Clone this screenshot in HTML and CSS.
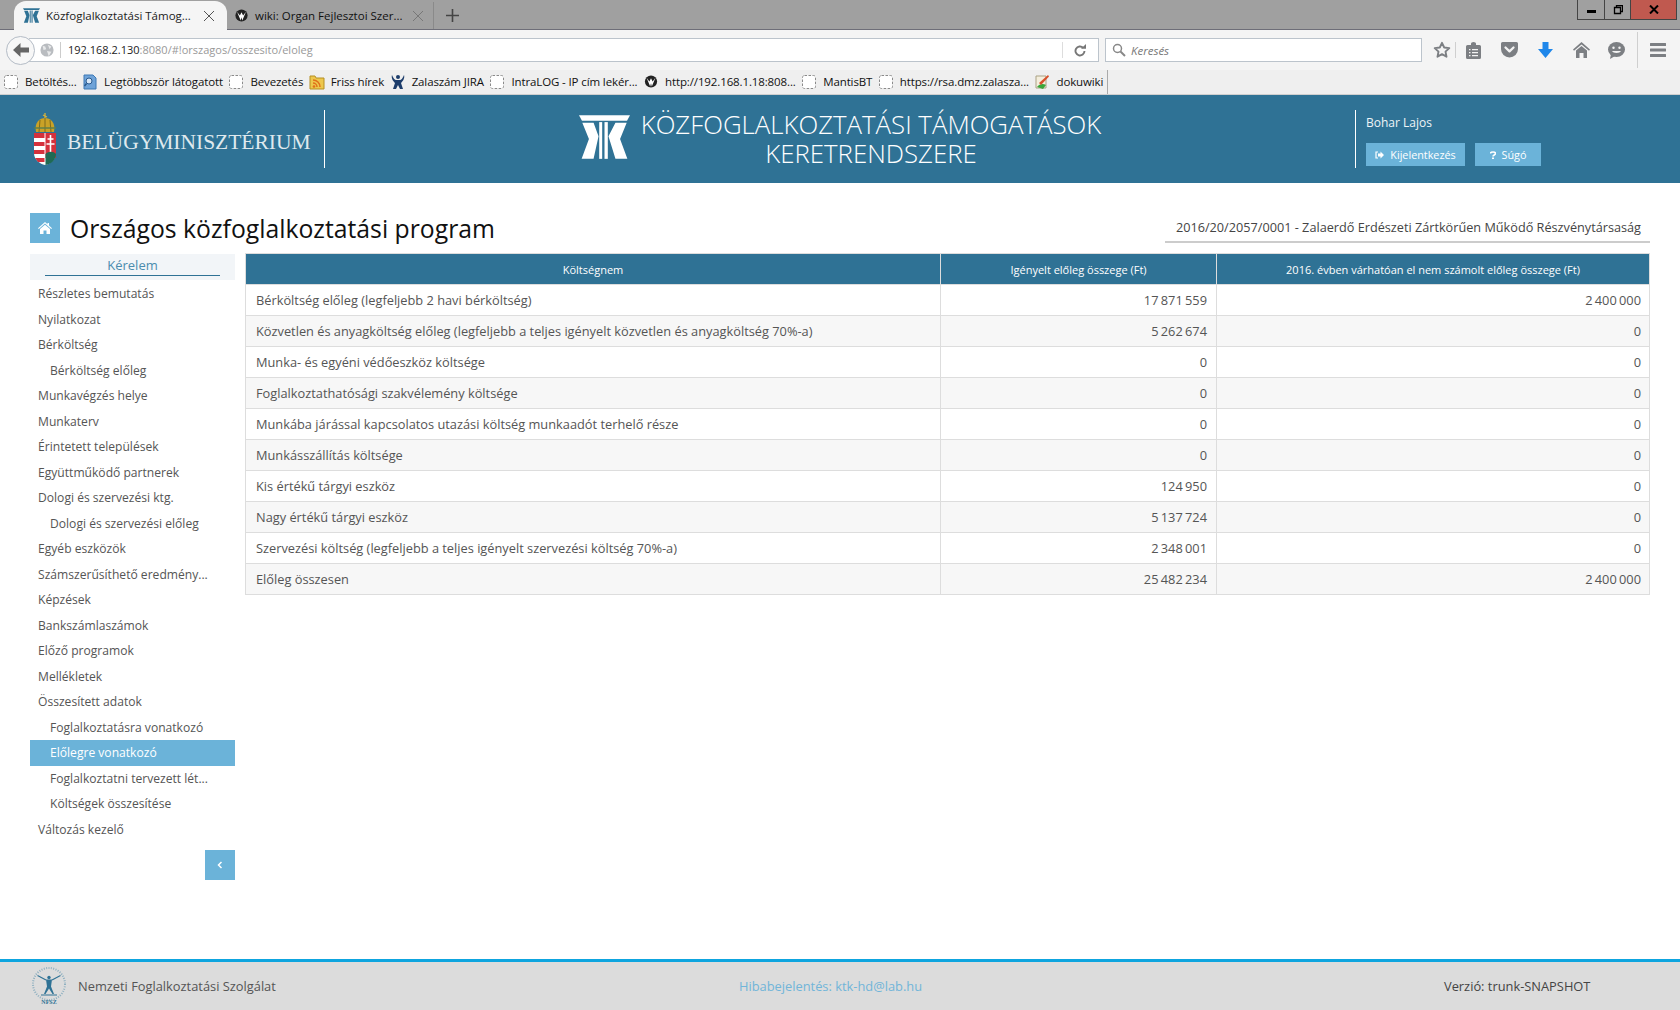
FILE: index.html
```html
<!DOCTYPE html>
<html lang="hu">
<head>
<meta charset="utf-8">
<title>Közfoglalkoztatási Támogatások Keretrendszere</title>
<link rel="stylesheet" href="styles.css">
</head>
<body>
<svg class="defs" width="0" height="0">
  <symbol id="ktk" viewBox="28 20 154 132">
    <path d="M28 20H182L173 37H37Z"/>
    <path d="M38 43H72L87 84 72 152H36L58 92Z"/>
    <path d="M89 41H98V152H89Z"/>
    <path d="M105 41H115V152H105Z"/>
    <path d="M172 43H138L117 84 138 152H174L152 92Z"/>
  </symbol>
  <symbol id="dash" viewBox="0 0 16 16">
    <rect x="1.5" y="1.5" width="13" height="13" rx="2" fill="#fff" stroke="#8a8a8a" stroke-dasharray="2.5 1.5"/>
  </symbol>
  <symbol id="globe" viewBox="0 0 16 16">
    <circle cx="8" cy="8" r="7.5" fill="#222"/>
    <path d="M2.500 3.500 7 14l1-4 1 4 4.500-10.500L10 8 8 4 6 8z" fill="#fff"/>
  </symbol>
</svg>

<div class="tabbar">
  <div class="tab tab-active">
    <svg class="tab-logo" width="17" height="15"><use href="#ktk"/></svg>
    <span class="tab-title">Közfoglalkoztatási Támog...</span>
    <svg class="tab-close" width="12" height="12" viewBox="0 0 12 12"><path d="M1 1l10 10M11 1L1 11" stroke="#555" fill="none"/></svg>
  </div>
  <div class="tab tab-idle">
    <svg class="tab-fav" width="13" height="13"><use href="#globe"/></svg>
    <span class="tab-title">wiki: Organ Fejlesztoi Szer...</span>
    <svg class="tab-close" width="12" height="12" viewBox="0 0 12 12"><path d="M1 1l10 10M11 1L1 11" stroke="#777" fill="none"/></svg>
  </div>
  <div class="tab-new"><svg width="13" height="13" viewBox="0 0 13 13"><path d="M6.500 0v13M0 6.500h13" stroke="#444" stroke-width="1.600"/></svg></div>
  <div class="winctl">
    <div class="win win-min"><span class="min-glyph"></span></div>
    <div class="win win-max"><svg width="10" height="10" viewBox="0 0 10 10"><path d="M2.500 2.500h5v6h-6v-6zM3.500 2V.5h6v6H8" fill="none" stroke="#000" stroke-width="1.300"/></svg></div>
    <div class="win win-close"><svg width="10" height="9" viewBox="0 0 10 9"><path d="M1 .5l8 8M9 .5l-8 8" stroke="#000" stroke-width="2"/></svg></div>
  </div>
</div>

<div class="navbar">
  <div class="back"><svg width="16" height="14" viewBox="0 0 16 14"><path d="M7.500 0L0 7l7.500 7V9.500H16v-5H7.500z" fill="#666"/></svg></div>
  <div class="urlbar">
    <svg class="url-globe" width="14" height="14" viewBox="0 0 16 16"><circle cx="8" cy="8" r="7.500" fill="#b9bcc0"/><path d="M3 3l3 1 1 3-3 1zM9 2l4 2-2 3zM8 9l5 1-3 5z" fill="#e8e9ea"/></svg>
    <span class="url-text"><span class="url-host">192.168.2.130</span>:8080/#!orszagos/osszesito/eloleg</span>
    <span class="url-reload"><svg width="13" height="13" viewBox="0 0 13 13"><path d="M10.500 7a4.500 4.500 0 1 1-1.400-3.300" fill="none" stroke="#777" stroke-width="1.900"/><path d="M7 4.800h5V0z" fill="#777"/></svg></span>
  </div>
  <div class="searchbar">
    <svg width="14" height="14" viewBox="0 0 14 14"><circle cx="5.500" cy="5.500" r="4" fill="none" stroke="#888" stroke-width="1.500"/><path d="M8.500 8.500L13 13" stroke="#888" stroke-width="2"/></svg>
    <span class="search-text">Keresés</span>
  </div>
  <div class="nav-icons">
    <svg class="ni ni-star" width="18" height="18" viewBox="0 0 18 18"><path d="M9 1.800l2.200 4.700 5.100.6-3.800 3.500 1 5.100L9 13.200l-4.500 2.500 1-5.100L1.700 7.100l5.100-.6z" fill="none" stroke="#7c7f83" stroke-width="1.900" stroke-linejoin="round"/></svg>
    <span class="ni-sep"></span>
    <svg class="ni ni-clip" width="15" height="17" viewBox="0 0 15 17"><path d="M1.500 3H5V1.500a2.500 1.500 0 0 1 5 0V3h3.500A1.500 1.500 0 0 1 15 4.500v11a1.500 1.500 0 0 1-1.500 1.500h-12A1.500 1.500 0 0 1 0 15.500v-11A1.500 1.500 0 0 1 1.500 3z" fill="#7c7f83"/><path d="M3 7h1.500v1.200H3zM6 7h6v1.200H6zM3 10h1.500v1.200H3zM6 10h6v1.200H6zM3 13h1.500v1.200H3zM6 13h6v1.200H6z" fill="#f3f3f3"/></svg>
    <svg class="ni ni-pocket" width="17" height="16" viewBox="0 0 17 16"><path d="M1.500 0h14A1.500 1.500 0 0 1 17 1.500V7A8.500 8.500 0 0 1 0 7V1.500A1.500 1.500 0 0 1 1.500 0z" fill="#7c7f83"/><path d="M4.500 5.500l4 3.800 4-3.800" fill="none" stroke="#f3f3f3" stroke-width="2.300" stroke-linecap="round" stroke-linejoin="round"/></svg>
    <svg class="ni ni-down" width="15" height="16" viewBox="0 0 15 16"><path d="M4.500 0h6v7H15l-7.500 9L0 7h4.500z" fill="#1f87ea"/></svg>
    <svg class="ni ni-home" width="17" height="16" viewBox="0 0 17 16"><path d="M8.500 0L17 7.500l-1 1.200-7.500-6.300L1 8.700 0 7.500z" fill="#7c7f83"/><path d="M8.500 4L14 8.600V16h-3.500v-5h-4v5H3V8.600z" fill="#7c7f83"/></svg>
    <svg class="ni ni-chat" width="17" height="17" viewBox="0 0 17 17"><ellipse cx="8.500" cy="7.500" rx="8.500" ry="7.500" fill="#7c7f83"/><path d="M3 12l-1 5 5-3z" fill="#7c7f83"/><circle cx="5.500" cy="5.800" r="1.200" fill="#f3f3f3"/><circle cx="11.500" cy="5.800" r="1.200" fill="#f3f3f3"/><path d="M4 9h9c-1 2.500-8 2.500-9 0z" fill="#f3f3f3"/></svg>
    <span class="ni-sep ni-sep-tall"></span>
    <svg class="ni ni-menu" width="16" height="14" viewBox="0 0 16 14"><path d="M.5 0h15a.5.5 0 0 1 .5.500v2a.5.5 0 0 1-.5.500H.500A.5.5 0 0 1 0 2.500v-2A.5.5 0 0 1 .5 0zM.5 5.500h15a.5.500 0 0 1 .5.500v2a.5.500 0 0 1-.5.500H.500A.5.500 0 0 1 0 8V6a.5.500 0 0 1 .5-.5zM.5 11h15a.5.500 0 0 1 .5.500v2a.5.500 0 0 1-.5.500H.500a.5.500 0 0 1-.5-.5v-2a.5.500 0 0 1 .5-.5z" fill="#7c7f83"/></svg>
  </div>
</div>

<div class="bookmarks">
  <div class="bm"><svg width="16" height="16"><use href="#dash"/></svg><span>Betöltés...</span></div>
  <div class="bm"><svg width="16" height="16" viewBox="0 0 16 16"><path d="M2 1h9l3 3v11H2z" fill="#6fa3d8" stroke="#3c78b5"/><circle cx="7" cy="7" r="3" fill="#d8e8f8" stroke="#29598e"/><path d="M4.500 9.500L2.500 12" stroke="#29598e" stroke-width="1.500"/></svg><span>Legtöbbször látogatott</span></div>
  <div class="bm"><svg width="16" height="16"><use href="#dash"/></svg><span>Bevezetés</span></div>
  <div class="bm"><svg width="16" height="16" viewBox="0 0 16 16"><path d="M1 2h5l1 2h8v11H1z" fill="#edc74d" stroke="#b58f23"/><circle cx="5" cy="12.500" r="1.300" fill="#e0701a"/><path d="M4 9a4 4 0 0 1 4 4M4 6a7 7 0 0 1 7 7" fill="none" stroke="#e0701a" stroke-width="1.500"/></svg><span>Friss hírek</span></div>
  <div class="bm"><svg width="16" height="16" viewBox="0 0 16 16"><circle cx="8" cy="3" r="2" fill="#1d3d6b"/><path d="M2 1c1 3 3 5 4 5h4c1 0 3-2 4-5 1 3-1 6-3 8l2 6h-3l-2-4-2 4H3l2-6C3 7 1 4 2 1z" fill="#1d3d6b"/></svg><span>Zalaszám JIRA</span></div>
  <div class="bm"><svg width="16" height="16"><use href="#dash"/></svg><span>IntraLOG - IP cím lekér...</span></div>
  <div class="bm"><svg width="16" height="13"><use href="#globe"/></svg><span>http://192.168.1.18:808...</span></div>
  <div class="bm"><svg width="16" height="16"><use href="#dash"/></svg><span>MantisBT</span></div>
  <div class="bm"><svg width="16" height="16"><use href="#dash"/></svg><span>https://rsa.dmz.zalasza...</span></div>
  <div class="bm"><svg width="16" height="16" viewBox="0 0 16 16"><path d="M2 2h10v12H2z" fill="#f4eedd" stroke="#a9a184"/><path d="M3 13c2-3 6-4 9-2l-3 4z" fill="#3aa63a"/><path d="M5 9l9-8 1 1.500L7 11z" fill="#d8502b"/></svg><span>dokuwiki</span></div>
  <span class="bm-sep"></span>
</div>

<header class="app-header">
  <div class="brand">
    <svg class="crest" width="24" height="52" viewBox="0 0 24 52">
      <path d="M3 19C1 9 7 5 12 5s11 4 9 14z" fill="#c9a227"/>
      <path d="M12 5v14M7 7l-1 12M17 7l1 12" stroke="#7f6a1c"/>
      <path d="M1 15h22" stroke="#5f7f4a" stroke-width="1.500"/>
      <path d="M12 0v5M10 2l4 2" stroke="#d6b23a" stroke-width="1.300"/>
      <path d="M1 20h22v20c0 7-6 11-11 12C7 51 1 47 1 40z" fill="#fff"/>
      <path d="M1 20h10.500v5H1zM1 29h10.500v4H1zM1 37h10.500v4H1zM2 45h9.500v4H5zM12.500 20H23v25H12.500z" fill="#d5313c"/>
      <path d="M17.500 22v18M14.500 26h6M13.500 31h8" stroke="#fff" stroke-width="1.600"/>
      <path d="M12.500 41c3-3 8-3 10.500 0 0 6-5 10-10.500 11z" fill="#1f6a54"/>
    </svg>
    <span class="brand-name">BELÜGYMINISZTÉRIUM</span>
  </div>
  <div class="app-title">
    <svg class="ktk-logo" width="51" height="44"><use href="#ktk"/></svg>
    <h1 class="title-text">KÖZFOGLALKOZTATÁSI TÁMOGATÁSOK<br>KERETRENDSZERE</h1>
  </div>
  <div class="user">
    <div class="user-name">Bohar Lajos</div>
    <div class="user-actions">
      <a class="hbtn hbtn-out"><svg width="9" height="8" viewBox="0 0 9 8"><path d="M3 1H1v6h2" fill="none" stroke="#fff" stroke-width="1.200"/><path d="M3 2.500h2.500V.5L9 4 5.500 7.500v-2H3z" fill="#fff"/></svg>Kijelentkezés</a>
      <a class="hbtn hbtn-help"><svg width="6" height="8" viewBox="0 0 6 8"><path d="M.5 2.500C.5.500 5.500.500 5.500 2.500 5.500 4 3 4 3 5.500" fill="none" stroke="#fff" stroke-width="1.600"/><path d="M2 6.500h2V8H2z" fill="#fff"/></svg>Súgó</a>
    </div>
  </div>
</header>

<main class="content">
  <div class="page-head">
    <div class="page-title">
      <span class="home-tile"><svg width="14" height="12" viewBox="0 0 14 12"><path d="M7 0l2.500 2.200V1H11v2.500L14 6.200l-.8.800L7 1.600.8 7 0 6.200z" fill="#fff"/><path d="M7 2.800l5 4.300V12H8.500V8.500h-3V12H2V7.100z" fill="#fff"/></svg></span>
      <h2 class="page-h">Országos közfoglalkoztatási program</h2>
    </div>
    <div class="company">2016/20/2057/0001 - Zalaerdő Erdészeti Zártkörűen Működő Részvénytársaság</div>
  </div>
  <div class="workspace">
    <nav class="sidebar">
      <div class="side-head"><span class="side-head-text">Kérelem</span></div>
      <a class="side-item">Részletes bemutatás</a>
      <a class="side-item">Nyilatkozat</a>
      <a class="side-item">Bérköltség</a>
      <a class="side-item side-sub">Bérköltség előleg</a>
      <a class="side-item">Munkavégzés helye</a>
      <a class="side-item">Munkaterv</a>
      <a class="side-item">Érintetett települések</a>
      <a class="side-item">Együttműködő partnerek</a>
      <a class="side-item">Dologi és szervezési ktg.</a>
      <a class="side-item side-sub">Dologi és szervezési előleg</a>
      <a class="side-item">Egyéb eszközök</a>
      <a class="side-item">Számszerűsíthető eredmény...</a>
      <a class="side-item">Képzések</a>
      <a class="side-item">Bankszámlaszámok</a>
      <a class="side-item">Előző programok</a>
      <a class="side-item">Mellékletek</a>
      <a class="side-item">Összesített adatok</a>
      <a class="side-item side-sub">Foglalkoztatásra vonatkozó</a>
      <a class="side-item side-sub side-active">Előlegre vonatkozó</a>
      <a class="side-item side-sub">Foglalkoztatni tervezett lét...</a>
      <a class="side-item side-sub">Költségek összesítése</a>
      <a class="side-item">Változás kezelő</a>
      <button class="collapse" type="button"><svg width="6" height="8" viewBox="0 0 6 8"><path d="M4.500 1L1.500 4l3 3" fill="none" stroke="#fff" stroke-width="1.500"/></svg></button>
    </nav>
    <table class="costs">
      <colgroup><col class="c1"><col class="c2"><col class="c3"></colgroup>
      <thead>
        <tr><th>Költségnem</th><th>Igényelt előleg összege (Ft)</th><th>2016. évben várhatóan el nem számolt előleg összege (Ft)</th></tr>
      </thead>
      <tbody>
        <tr><td>Bérköltség előleg (legfeljebb 2 havi bérköltség)</td><td>17 871 559</td><td>2 400 000</td></tr>
        <tr><td>Közvetlen és anyagköltség előleg (legfeljebb a teljes igényelt közvetlen és anyagköltség 70%-a)</td><td>5 262 674</td><td>0</td></tr>
        <tr><td>Munka- és egyéni védőeszköz költsége</td><td>0</td><td>0</td></tr>
        <tr><td>Foglalkoztathatósági szakvélemény költsége</td><td>0</td><td>0</td></tr>
        <tr><td>Munkába járással kapcsolatos utazási költség munkaadót terhelő része</td><td>0</td><td>0</td></tr>
        <tr><td>Munkásszállítás költsége</td><td>0</td><td>0</td></tr>
        <tr><td>Kis értékű tárgyi eszköz</td><td>124 950</td><td>0</td></tr>
        <tr><td>Nagy értékű tárgyi eszköz</td><td>5 137 724</td><td>0</td></tr>
        <tr><td>Szervezési költség (legfeljebb a teljes igényelt szervezési költség 70%-a)</td><td>2 348 001</td><td>0</td></tr>
        <tr><td>Előleg összesen</td><td>25 482 234</td><td>2 400 000</td></tr>
      </tbody>
    </table>
  </div>
</main>

<footer class="app-footer">
  <div class="org">
    <svg class="nfsz" width="38" height="38" viewBox="0 0 38 38">
      <circle cx="19" cy="17" r="16" fill="none" stroke="#8fb0c0" stroke-width="2" stroke-dasharray="1 1.400"/>
      <circle cx="19" cy="10.500" r="1.700" fill="#2f7295"/>
      <path d="M7.500 8.500L16 13M30.500 8.500L22 13" stroke="#2f7295" stroke-width="1.200" fill="none"/>
      <path d="M16 12.500h6l-1 7 3 7.500h-1.500L19 21.500 15.500 27H14l3-7.500z" fill="#2f7295"/>
      <path d="M11 28h16" stroke="#2f7295"/>
      <text x="19" y="36.500" class="nfsz-text" text-anchor="middle">NFSZ</text>
    </svg>
    <span>Nemzeti Foglalkoztatási Szolgálat</span>
  </div>
  <a class="report">Hibabejelentés: ktk-hd@lab.hu</a>
  <span class="version">Verzió: trunk-SNAPSHOT</span>
</footer>
</body>
</html>
```
FILE: styles.css
```css
* { box-sizing: border-box; }
html, body { height: 100%; }
body {
  margin: 0;
  height: 1010px;
  display: flex;
  flex-direction: column;
  overflow: hidden;
  background: #fff;
  color: #444;
  font-family: "Open Sans", "Noto Sans", sans-serif;
  font-size: 13px;
}
.defs { position: absolute; }

/* browser chrome */
.tabbar {
  height: 30px;
  flex: none;
  display: flex;
  align-items: flex-end;
  background: #a0a0a0;
  border-bottom: 1px solid #6e6e78;
  padding-left: 14px;
}
.tab { display: flex; align-items: center; height: 27px; font-size: 11.5px; }
.tab-active {
  width: 213px;
  height: 29px;
  margin-bottom: -1px;
  padding: 0 12px 0 9px;
  background: #f5f5f5;
  border-radius: 12px 12px 0 0;
  color: #222;
  gap: 6px;
  fill: #2f7295;
}
.tab-idle { width: 207px; padding: 0 9px 0 8px; gap: 7px; color: #111; border-right: 1px solid #8a8a8a; }
.tab-fav { flex: none; }
.tab-title { flex: 1; white-space: nowrap; }
.tab-new { width: 36px; height: 27px; display: flex; align-items: center; justify-content: center; }
.winctl { margin-left: auto; margin-right: 3px; align-self: flex-start; display: flex; height: 20px; border: 1px solid #444; border-top: 0; }
.win { height: 100%; display: flex; align-items: center; justify-content: center; border-right: 1px solid #444; }
.win-min { width: 27px; }
.win-max { width: 26px; }
.win-close { width: 45px; background: #c0594f; border-right: 0; }
.min-glyph { width: 9px; height: 3px; background: #000; margin-top: 4px; }

.navbar {
  height: 40px;
  flex: none;
  display: flex;
  align-items: center;
  background: #f4f4f4;
  padding-left: 6px;
}
.back {
  width: 29px;
  height: 29px;
  border-radius: 50%;
  background: #f7f7f7;
  border: 1px solid #b4bcc6;
  display: flex;
  align-items: center;
  justify-content: center;
  flex: none;
  position: relative;
  z-index: 1;
}
.urlbar {
  width: 1070px;
  margin-left: -6px;
  height: 24px;
  display: flex;
  align-items: center;
  background: #fff;
  border: 1px solid #bcc4cc;
  border-left: 0;
  padding-left: 11px;
  font-size: 11px;
  color: #999;
}
.url-globe { flex: none; }
.url-text { margin-left: 6px; padding-left: 7px; border-left: 1px solid #ccc; line-height: 16px; flex: 1; }
.url-host { color: #222; }
.url-reload { width: 36px; height: 16px; border-left: 1px solid #ddd; display: flex; align-items: center; justify-content: center; }
.searchbar {
  width: 317px;
  height: 24px;
  margin-left: 6px;
  display: flex;
  align-items: center;
  gap: 5px;
  padding-left: 6px;
  background: #fff;
  border: 1px solid #bcc4cc;
  font-size: 11.5px;
  font-style: italic;
  color: #777;
}
.nav-icons { display: flex; align-items: center; height: 100%; margin-left: 11px; flex: 1; }
.ni { flex: none; }
.ni-sep { width: 1px; height: 16px; background: #cfcfcf; margin: 0 10px 0 4px; flex: none; }
.ni-pocket { margin-left: 20px; }
.ni-down { margin-left: 20px; }
.ni-home { margin-left: 20px; }
.ni-chat { margin-left: 18px; }
.ni-sep-tall { height: 36px; margin: 0 12px 0 12px; }

.bookmarks {
  height: 25px;
  flex: none;
  display: flex;
  align-items: center;
  background: #efefef;
  border-bottom: 1px solid #cfcfcf;
  padding: 0 0 1px 3px;
  font-size: 11.5px;
  letter-spacing: -.12px;
  color: #111;
  gap: 5.500px;
  white-space: nowrap;
}
.bm { display: flex; align-items: center; gap: 6px; }
.bm svg { flex: none; }
.bm-sep { width: 1px; height: 24px; background: #aaa; margin-left: -2px; }

/* app header */
.app-header {
  height: 88px;
  flex: none;
  display: grid;
  grid-template-columns: 325px 1030px 1fr;
  align-items: center;
  background: #2f7295;
  color: #fff;
}
.brand {
  height: 58px;
  display: flex;
  align-items: center;
  padding-left: 33px;
  gap: 10px;
  border-right: 1px solid #fff;
}
.brand-name { padding-top: 7px; font-family: "Liberation Serif", serif; font-size: 21.5px; color: #dfe9ee; white-space: nowrap; }
.app-title { display: flex; align-items: center; justify-content: center; gap: 11px; }
.ktk-logo { fill: #fff; flex: none; margin-bottom: 4px; }
.title-text { margin: 0; font-size: 25.800px; font-weight: 300; line-height: 29px; text-align: center; white-space: nowrap; }
.user { height: 58px; border-left: 1px solid #fff; padding-left: 10px; }
.user-name { font-size: 12px; line-height: 18px; margin-top: 4px; color: #eef4f7; }
.user-actions { display: flex; gap: 10px; margin-top: 11px; }
.hbtn { height: 23px; display: flex; align-items: center; justify-content: center; gap: 6px; background: #6bb3d9; color: #fff; font-size: 10.800px; }
.hbtn-out { width: 99px; }
.hbtn-help { width: 66px; }

/* main */
.content { flex: 1; padding: 30px 30px 0; }
.page-head { display: flex; justify-content: space-between; align-items: flex-start; height: 40px; }
.page-title { display: flex; align-items: center; gap: 10px; height: 30px; }
.home-tile { width: 30px; height: 30px; background: #6bb3d9; display: flex; align-items: center; justify-content: center; }
.page-h { margin: 2px 0 0; font-size: 24.750px; font-weight: 400; color: #111; white-space: nowrap; line-height: 30px; }
.company { width: 485px; height: 30px; padding: 0 9px 0 0; border-bottom: 2px solid #ccc; text-align: right; line-height: 28px; font-size: 12.700px; color: #444; white-space: nowrap; }
.workspace { display: flex; gap: 10px; align-items: flex-start; }

.sidebar { width: 205px; flex: none; display: flex; flex-direction: column; margin-top: 1px; }
.side-head { height: 26px; padding: 0 15px; margin-bottom: 1px; background: #f2f5f8; text-align: center; }
.side-head-text { display: block; height: 22px; line-height: 22px; border-bottom: 1px solid #2f7295; color: #4b8cae; font-size: 13px; }
.side-item { height: 25.500px; line-height: 25.500px; padding-left: 8px; font-size: 12.100px; color: #555; white-space: nowrap; }
.side-sub { padding-left: 20px; }
.side-active { background: #6bb3d9; color: #fff; }
.collapse { width: 30px; height: 30px; margin: 8px 0 0 auto; padding: 0; border: 0; background: #6bb3d9; display: flex; align-items: center; justify-content: center; }

.costs { flex: 1; border-collapse: collapse; table-layout: fixed; font-size: 12.800px; }
.c1 { width: 695px; }
.c2 { width: 276px; }
.costs th { height: 31px; background: #2f7295; color: #fff; font-weight: 400; font-size: 11px; border: 1px solid #ddd; padding: 0 8px; }
.costs td { height: 31px; padding: 0 8px; border: 1px solid #ddd; color: #555; text-align: right; white-space: nowrap; word-spacing: -1px; }
.costs td:first-child { text-align: left; padding-left: 10px; word-spacing: 0; }
.costs td:nth-child(2) { padding-right: 9px; }
.costs tbody tr:nth-child(even) td { background: #f7f7f7; }

/* footer */
.app-footer {
  height: 51px;
  flex: none;
  display: grid;
  grid-template-columns: 709px 705px 1fr;
  align-items: center;
  padding-left: 30px;
  background: #dcdcdc;
  border-top: 3px solid #0ea5df;
  color: #555;
  font-size: 12.850px;
}
.org { display: flex; align-items: center; gap: 10px; }
.nfsz { flex: none; }
.nfsz-text { font-size: 6px; font-weight: 700; font-family: "Liberation Serif", serif; fill: #2f7295; }
.report { color: #71b5d9; }
.version { color: #444; }
```
